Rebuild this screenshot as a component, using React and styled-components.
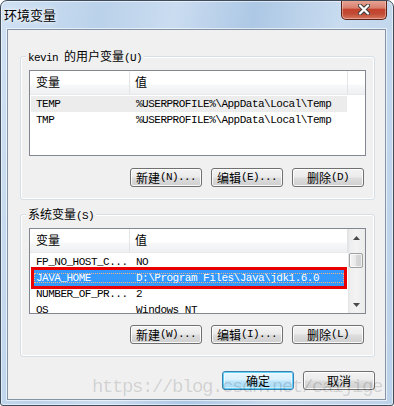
import React from "react";
import styled, { createGlobalStyle, css } from "styled-components";

const GlobalStyle = createGlobalStyle`
  html, body {
    margin: 0;
    padding: 0;
    background: #fff;
  }
  body {
    font-family: "Noto Sans CJK SC", sans-serif;
    font-size: 12px;
    color: #000;
  }
`;

const Window = styled.div`
  position: relative;
  width: 394px;
  height: 406px;
  box-sizing: border-box;
  display: flex;
  flex-direction: column;
  padding: 0 7px 5px 6px;
  border: 1px solid #3e4c5b;
  border-radius: 7px 7px 3px 3px;
  overflow: hidden;
  background: linear-gradient(
    100deg,
    #d0e1f3 0%,
    #bad2ea 22%,
    #cadcf0 38%,
    #adc8e5 55%,
    #c8dbef 74%,
    #bcd2ea 100%
  );
  box-shadow: inset 0 0 0 1px rgba(255, 255, 255, 0.55);
`;

const TitleBar = styled.div`
  height: 28px;
  display: flex;
  align-items: flex-start;
  justify-content: space-between;
  flex-shrink: 0;
`;

const Title = styled.div`
  margin: 6px 0 0 -3px;
  font-size: 13px;
  line-height: 16px;
  text-shadow: 0 0 6px #fff, 0 0 3px rgba(255, 255, 255, 0.9);
`;

const CloseButton = styled.div`
  width: 46px;
  height: 20px;
  box-sizing: border-box;
  margin: -1px -1px 0 0;
  display: flex;
  align-items: center;
  justify-content: center;
  border: 1px solid #5a2219;
  border-top: none;
  border-radius: 0 0 5px 5px;
  background: linear-gradient(
    #e8a797 0%,
    #d98070 42%,
    #c5432d 50%,
    #c04a33 72%,
    #d77660 100%
  );
  box-shadow: inset 0 0 0 1px rgba(255, 220, 210, 0.45);
`;

const Client = styled.div`
  flex: 1;
  display: flex;
  flex-direction: column;
  background: #f0f0f0;
  border: 1px solid #8494a6;
  box-shadow: 0 0 0 1px rgba(255, 255, 255, 0.6);
  padding: 26px 10px 0 12px;
`;

const GroupBox = styled.section`
  border: 1px solid #d5dfe5;
  border-radius: 3px;
  box-shadow: inset 0 0 0 1px #fff;
  padding: 0 8px 12px;

  & + & {
    margin-top: 14px;
  }
`;

const GroupTitle = styled.div`
  display: table;
  margin: -8px 0 5px -3px;
  padding: 0 2px;
  background: #f0f0f0;
  line-height: 14px;
  font-size: 12px;
`;

const Latin = styled.span`
  font-family: "Liberation Mono", monospace;
  font-size: 11px;
  letter-spacing: -0.6px;
`;

const List = styled.div`
  height: 86px;
  box-sizing: border-box;
  display: flex;
  border: 1px solid #828790;
  background: #fff;
  overflow: hidden;
`;

const Table = styled.div`
  flex: 1;
  min-width: 0;
`;

const Header = styled.div`
  display: flex;
  height: 24px;
  box-sizing: border-box;
  border-bottom: 1px solid #e8e9eb;
  background: linear-gradient(#fff 0%, #fff 55%, #f6f7f8 65%, #eff0f2 100%);
`;

const HeaderCell = styled.div`
  width: ${({ w }) => w}px;
  box-sizing: border-box;
  padding-left: ${({ pad }) => pad}px;
  border-right: 1px solid #e3e4e6;
  line-height: 22px;
  font-size: 12px;
`;

const Rows = styled.div`
  padding-top: 1px;
`;

const Row = styled.div`
  position: relative;
  display: flex;
  width: 316px;
  height: 16px;
  margin-left: 1px;
  font-family: "Liberation Mono", monospace;
  font-size: 11px;
  letter-spacing: -0.5px;
  line-height: 16px;
  white-space: nowrap;

  ${({ state }) =>
    state === "inactive" &&
    css`
      background: #ececec;
    `}

  ${({ state }) =>
    state === "selected" &&
    css`
      z-index: 1;
      color: #fff;
      background: #3399ff;
      outline: 1px dotted #f0b48a;
      outline-offset: -4px;
      box-shadow: inset 3px 0 #e80000, inset -3px 0 #e80000,
        0 -3px #e80000, 0 3px #e80000;
    `}
`;

const Cell = styled.div`
  width: ${({ w }) => w}px;
  box-sizing: border-box;
  padding-left: ${({ pad }) => pad}px;
  overflow: hidden;
`;

const Scrollbar = styled.div`
  width: 17px;
  flex-shrink: 0;
  display: flex;
  flex-direction: column;
  background: linear-gradient(90deg, #e2e3e4 0px, #eeeeee 2px, #f3f3f3 8px, #ebebeb 17px);
`;

const ArrowBox = styled.div`
  height: 17px;
  display: flex;
  align-items: center;
  justify-content: center;
`;

const Track = styled.div`
  flex: 1;
`;

const Thumb = styled.div`
  width: 14px;
  height: 15px;
  box-sizing: border-box;
  margin: 7px 0 0 1px;
  border: 1px solid #a0a0a0;
  border-radius: 2px;
  background: linear-gradient(90deg, #f4f4f4 0%, #e8e8e8 50%, #d9d9d9 51%, #cfcfcf 100%);
  box-shadow: inset 0 0 0 1px rgba(255, 255, 255, 0.7);
`;

const ButtonRow = styled.div`
  display: flex;
  justify-content: flex-end;
  gap: 9px;
  margin-top: ${({ top }) => top}px;
  padding-right: ${({ right }) => right}px;
`;

const Button = styled.div`
  width: 72px;
  height: 19px;
  box-sizing: border-box;
  display: flex;
  align-items: center;
  justify-content: center;
  border: 1px solid #707070;
  border-radius: 3px;
  background: linear-gradient(#f3f3f3 0%, #ebebeb 48%, #dddddd 52%, #cfcfcf 100%);
  box-shadow: inset 0 0 0 1px rgba(255, 255, 255, 0.85);
  font-size: 12px;
  line-height: 17px;
  white-space: nowrap;

  ${({ primary }) =>
    primary &&
    css`
      border-color: #3c7fb1;
      background: linear-gradient(#eaf6fd 0%, #d9f0fc 48%, #bee6fd 52%, #a7d9f5 100%);
      box-shadow: inset 0 0 0 1px #5fd2f8, inset 0 0 0 2px rgba(255, 255, 255, 0.5);
    `}
`;

const Watermark = styled.div`
  position: absolute;
  left: 91px;
  top: 377px;
  font-family: "Liberation Mono", monospace;
  font-size: 19px;
  line-height: 19px;
  letter-spacing: -1.4px;
  color: rgba(0, 0, 0, 0.14);
  white-space: nowrap;
  pointer-events: none;
  z-index: 2;
`;

const userVars = [
  ["TEMP", "%USERPROFILE%\\AppData\\Local\\Temp", "inactive"],
  ["TMP", "%USERPROFILE%\\AppData\\Local\\Temp"],
];

const systemVars = [
  ["FP_NO_HOST_C...", "NO"],
  ["JAVA_HOME", "D:\\Program Files\\Java\\jdk1.6.0", "selected"],
  ["NUMBER_OF_PR...", "2"],
  ["OS", "Windows_NT"],
];

const CloseGlyph = () => (
  <svg width="12" height="11" viewBox="0 0 12 11">
    <path d="M2 1.5 L10 9.5 M10 1.5 L2 9.5" stroke="#3a3a3a" strokeWidth="4.2" strokeLinecap="round" />
    <path d="M2 1.5 L10 9.5 M10 1.5 L2 9.5" stroke="#fff" strokeWidth="2.4" strokeLinecap="round" />
  </svg>
);

const Arrow = ({ down }) => (
  <svg width="7" height="4" viewBox="0 0 7 4">
    <polygon points={down ? "0,0 7,0 3.5,4" : "3.5,0 7,4 0,4"} fill="#4a4a4a" />
  </svg>
);

const VarList = ({ rows, scroll }) => (
  <List>
    <Table>
      <Header>
        <HeaderCell w={100} pad={6}>变量</HeaderCell>
        <HeaderCell w={218} pad={5}>值</HeaderCell>
      </Header>
      <Rows>
        {rows.map(([name, value, state]) => (
          <Row key={name} state={state}>
            <Cell w={98} pad={5}>{name}</Cell>
            <Cell w={218} pad={7}>{value}</Cell>
          </Row>
        ))}
      </Rows>
    </Table>
    {scroll && (
      <Scrollbar>
        <ArrowBox>
          <Arrow />
        </ArrowBox>
        <Track>
          <Thumb />
        </Track>
        <ArrowBox>
          <Arrow down />
        </ArrowBox>
      </Scrollbar>
    )}
  </List>
);

const Actions = ({ keys, top }) => (
  <ButtonRow top={top} right={2}>
    <Button>新建<Latin>({keys[0]})...</Latin></Button>
    <Button>编辑<Latin>({keys[1]})...</Latin></Button>
    <Button>删除<Latin>({keys[2]})</Latin></Button>
  </ButtonRow>
);

const App = () => (
  <>
    <GlobalStyle />
    <Window>
      <TitleBar>
        <Title>环境变量</Title>
        <CloseButton>
          <CloseGlyph />
        </CloseButton>
      </TitleBar>
      <Client>
        <GroupBox>
          <GroupTitle>
            <Latin>kevin </Latin>的用户变量<Latin>(U)</Latin>
          </GroupTitle>
          <VarList rows={userVars} />
          <Actions keys={["N", "E", "D"]} top={12} />
        </GroupBox>
        <GroupBox>
          <GroupTitle>
            系统变量<Latin>(S)</Latin>
          </GroupTitle>
          <VarList rows={systemVars} scroll />
          <Actions keys={["W", "I", "L"]} top={11} />
        </GroupBox>
        <ButtonRow top={14} right={0}>
          <Button primary>确定</Button>
          <Button>取消</Button>
        </ButtonRow>
      </Client>
      <Watermark>https://blog.csdn.net/caijige</Watermark>
    </Window>
  </>
);

export default App;
